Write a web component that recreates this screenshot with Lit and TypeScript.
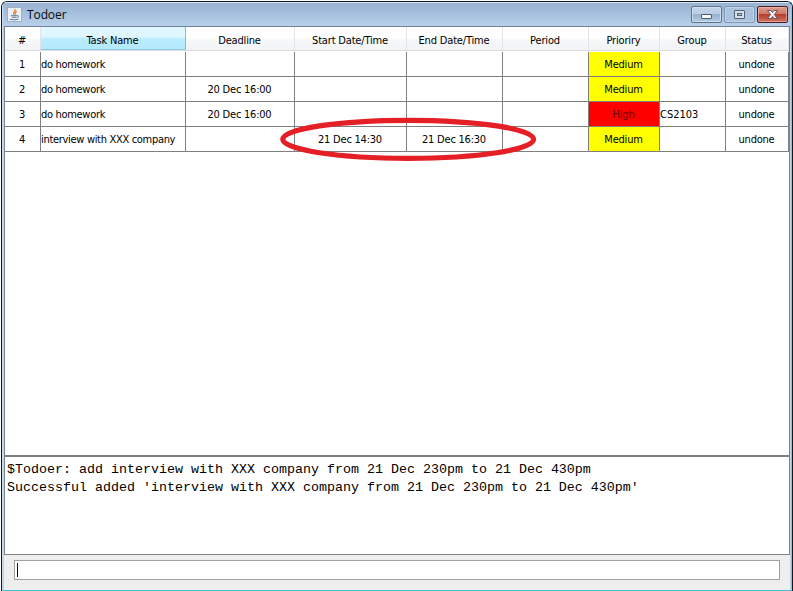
import { LitElement, html, css } from "lit";
import { customElement } from "lit/decorators.js";
import { classMap } from "lit/directives/class-map.js";

const HEADERS = ["#", "Task Name", "Deadline", "Start Date/Time", "End Date/Time", "Period", "Prioriry", "Group", "Status"];
const ROWS = [
  ["1", "do homework", "", "", "", "", "Medium", "", "undone"],
  ["2", "do homework", "20 Dec 16:00", "", "", "", "Medium", "", "undone"],
  ["3", "do homework", "20 Dec 16:00", "", "", "", "High", "CS2103", "undone"],
  ["4", "interview with XXX company", "", "21 Dec 14:30", "21 Dec 16:30", "", "Medium", "", "undone"],
];

@customElement("title-bar")
class TitleBar extends LitElement {
  static styles = css`
    :host { display: flex; height: 24px; box-sizing: border-box; padding-left: 3px;
      background: linear-gradient(#9ab3d1, #a3bddc 40%, #b8d0ea); border-bottom: 1px solid #6e8399; }
    .icon { width: 15px; height: 15px; margin-top: 4px; flex: none; }
    .title { flex: 1; margin-left: 5px; font: 12px/23px "Open Sans", sans-serif; letter-spacing: -0.1px; color: #0a0a0a; height: 23px; }
    .buttons { display: flex; gap: 2px; margin-top: 3px; margin-right: 2px; }
    .btn { width: 31px; height: 17px; display: block; }
  `;
  render() {
    return html`
      <svg class="icon" viewBox="0 0 15 15">
        <rect x=".5" y=".5" width="14" height="14" fill="#eef1f3" stroke="#a3b1bf"/>
        <path d="M8 2C9.2 4 5.3 4.8 6.8 7.8M9.8 4.2C7.4 5.4 8.8 6.2 8 7.8" fill="none" stroke="#e0813c" stroke-width="1.3"/>
        <path d="M4 8.7h6M4.8 10.3h4.8M3 12.4q4.5 1 8.5-.2M10.3 8.4q2.6.2.2 2.2" fill="none" stroke="#58799a"/>
      </svg>
      <div class="title">Todoer</div>
      <div class="buttons">
        <svg class="btn" viewBox="0 0 31 17">
          <defs><linearGradient id="a" x2="0" y2="1"><stop stop-color="#c5d6e9"/><stop offset=".48" stop-color="#b8cce2"/><stop offset=".5" stop-color="#98b1cd"/><stop offset="1" stop-color="#b5cde6"/></linearGradient></defs>
          <rect x=".5" y=".5" width="30" height="16" rx="1.5" fill="url(#a)" stroke="#5f7389"/>
          <rect x="1.5" y="1.5" width="28" height="14" rx="1" fill="none" stroke="#d6e3f1" stroke-opacity=".8"/>
          <rect x="10.5" y="8.5" width="10" height="4" rx=".5" fill="#fafafa" stroke="#535666"/>
        </svg>
        <svg class="btn" viewBox="0 0 31 17">
          <rect x=".5" y=".5" width="30" height="16" rx="1.5" fill="#abc3df" stroke="#8097b3"/>
          <rect x="1.5" y="1.5" width="28" height="14" rx="1" fill="none" stroke="#c0d3e9"/>
          <rect x="10.5" y="4.5" width="10" height="8" rx=".5" fill="#d5dfe9" stroke="#56606e"/>
          <rect x="13.5" y="7.5" width="4" height="2" fill="#b4c5d8" stroke="#56606e"/>
        </svg>
        <svg class="btn" viewBox="0 0 31 17">
          <defs><linearGradient id="r" x2="0" y2="1"><stop stop-color="#dfa093"/><stop offset=".47" stop-color="#cf7565"/><stop offset=".5" stop-color="#b93e2b"/><stop offset="1" stop-color="#d07563"/></linearGradient></defs>
          <rect x=".5" y=".5" width="30" height="16" rx="1.5" fill="url(#r)" stroke="#511b22"/>
          <rect x="1.5" y="1.5" width="28" height="14" rx="1" fill="none" stroke="#eab8ad" stroke-opacity=".7"/>
          <path d="M10.5 4.5h3.3l1.7 2 1.7-2h3.3l-3.2 4 3.2 4h-3.3l-1.7-2-1.7 2h-3.3l3.2-4z" fill="#fafafa" stroke="#59485a" stroke-width=".9"/>
        </svg>
      </div>`;
  }
}

@customElement("task-table")
class TaskTable extends LitElement {
  static styles = css`
    :host { display: block; position: relative; height: 428px; background: #fff;
      font: 11px/26px "DejaVu Sans Condensed", sans-serif; letter-spacing: -0.22px; color: #000; }
    .row { display: grid; grid-template-columns: 36px 145px 109px 112px 96px 86px 71px 66px 63px; }
    .head { height: 25px; box-sizing: border-box; padding-bottom: 1px; background: linear-gradient(#fff 45%, #f7f8fa 50%, #f2f3f5 90%, #dcdddf 94%, #fff 98%); }
    .th { box-sizing: border-box; border-right: 1px solid #e2e4e8; padding-right: 1px; text-align: center; line-height: 28px; height: 23px; white-space: nowrap; letter-spacing: -0.17px; }
    .sorted { background: linear-gradient(#e0f7ff 45%, #bdedff 52%, #b3e9fe); border-right-color: #87bbd1; border-bottom: 1px solid #93c9e3; }
    .td { box-sizing: border-box; height: 25px; border-right: 1px solid #808080; border-bottom: 1px solid #808080; padding-right: 1px; text-align: center; white-space: nowrap; }
    .left { text-align: left; letter-spacing: -0.31px; }
    .group { letter-spacing: 0; }
    .medium { background: #ff0; }
    .high { background: #f00; color: #600; }
    .mark { position: absolute; left: 274px; top: 89px; width: 260px; height: 46px; }
  `;
  render() {
    return html`
      <div class="row head">${HEADERS.map((h, i) => html`<div class=${classMap({ th: true, sorted: i === 1 })}>${h}</div>`)}</div>
      ${ROWS.map((r) => html`<div class="row">${r.map((c, i) => html`<div class=${classMap({
        td: true, left: i === 1 || i === 7, group: i === 7, medium: c === "Medium", high: c === "High" })}>${c}</div>`)}</div>`)}
      <svg class="mark" viewBox="0 0 260 46"><ellipse cx="129.2" cy="23.3" rx="125.4" ry="19" fill="none" stroke="#e51f26" stroke-width="5.2"/></svg>`;
  }
}

@customElement("app-root")
class AppRoot extends LitElement {
  static styles = css`
    :host { display: flow-root; width: 793px; height: 591px; overflow: hidden; background: #fff; }
    .window { box-sizing: border-box; margin: 1px 0 0 1px; width: 792px; height: 590px;
      border: 1px solid #101820; border-bottom: 0; border-radius: 6px 6px 0 0; overflow: hidden; background: linear-gradient(#a9c3e0, #b9d1ea 40px, #b9d6ee); }
    .frame { height: 589px; box-sizing: border-box; border: 1px solid #c9dcef; border-right-color: #7cc8e0; border-bottom: 1px solid #3fc0de; border-top-color: #dbe8f5; padding: 0 1px; }
    .panes { border-left: 1px solid #7b8790; border-right: 1px solid #7b8790; }
    .log { height: 100px; box-sizing: border-box; border-top: 2px solid #808080; border-bottom: 1px solid #808080; background: #fff;
      padding: 4px 2px; font: 13.33px/18px "Liberation Mono", monospace; color: #000; white-space: pre; }
    .foot { height: 35px; box-sizing: border-box; background: #eee; padding: 5px 10px; }
    .input { height: 20px; box-sizing: border-box; border: 1px solid #a0a0a0; background: #fff; padding: 2px; }
    .caret { width: 1px; height: 14px; background: #000050; }
  `;
  render() {
    return html`<div class="window"><div class="frame">
      <title-bar></title-bar>
      <div class="panes">
        <task-table></task-table>
        <div class="log"><div>$Todoer: add interview with XXX company from 21 Dec 230pm to 21 Dec 430pm</div><div>Successful added 'interview with XXX company from 21 Dec 230pm to 21 Dec 430pm'</div></div>
      </div>
      <div class="foot"><div class="input"><div class="caret"></div></div></div>
    </div></div>`;
  }
}
